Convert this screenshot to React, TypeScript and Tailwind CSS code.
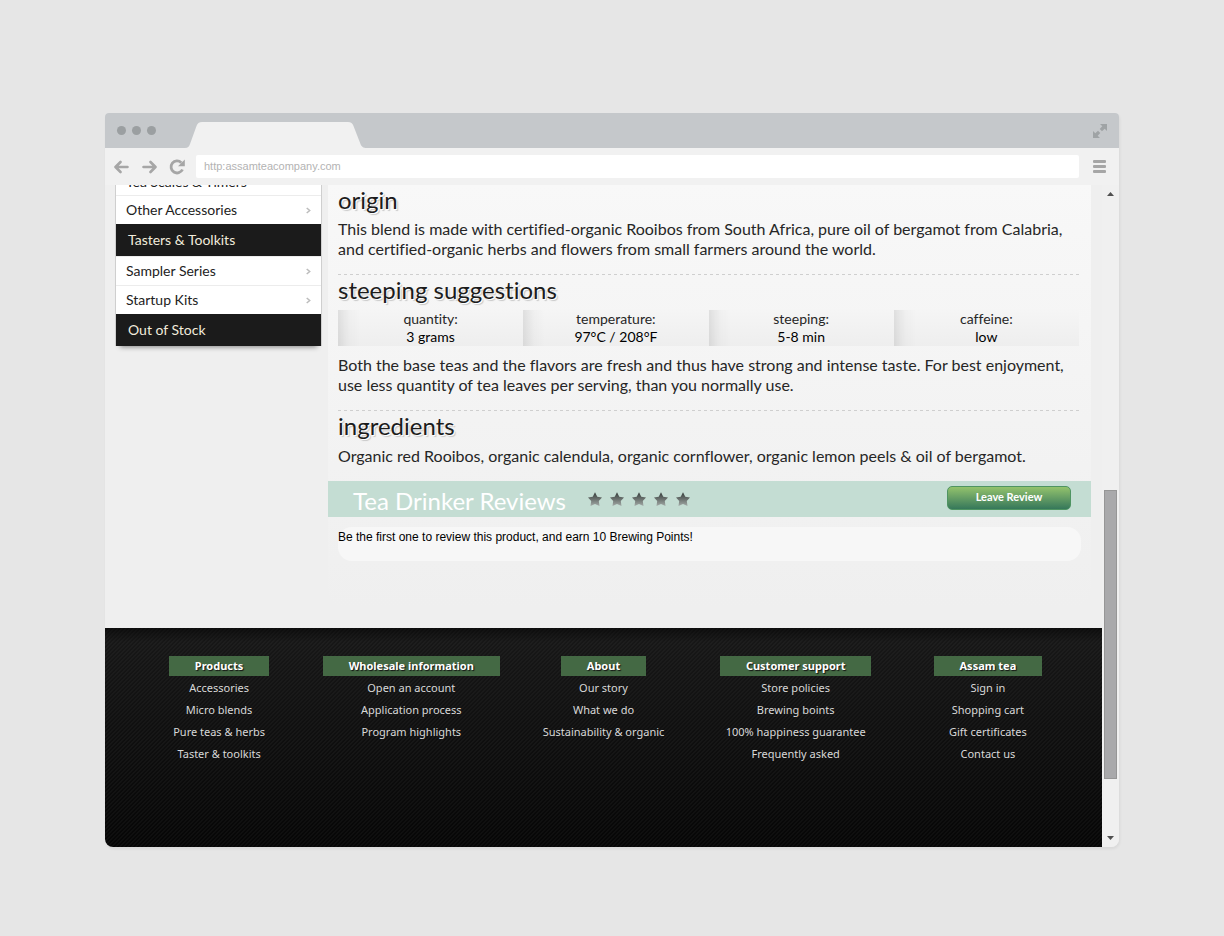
import React from "react";

type NavItem = { label: string; heading?: boolean; clipped?: boolean };

const navItems: NavItem[] = [
  { label: "Tea Scales & Timers", clipped: true },
  { label: "Other Accessories" },
  { label: "Tasters & Toolkits", heading: true },
  { label: "Sampler Series" },
  { label: "Startup Kits" },
  { label: "Out of Stock", heading: true },
];

const steeping = [
  { term: "quantity:", value: "3 grams" },
  { term: "temperature:", value: "97°C / 208°F" },
  { term: "steeping:", value: "5-8 min" },
  { term: "caffeine:", value: "low" },
];

const footerColumns = [
  { title: "Products", links: ["Accessories", "Micro blends", "Pure teas & herbs", "Taster & toolkits"] },
  { title: "Wholesale information", links: ["Open an account", "Application process", "Program highlights"] },
  { title: "About", links: ["Our story", "What we do", "Sustainability & organic"] },
  { title: "Customer support", links: ["Store policies", "Brewing boints", "100% happiness guarantee", "Frequently asked"] },
  { title: "Assam tea", links: ["Sign in", "Shopping cart", "Gift certificates", "Contact us"] },
];

function TabStrip() {
  return (
    <div className="flex h-[35px] items-end bg-[#c5c8cb]">
      <div className="flex h-full flex-1 items-center">
        <div className="flex w-[80px] gap-[6px] pl-3">
          <span className="size-[9px] rounded-full bg-[#9b9fa1]" />
          <span className="size-[9px] rounded-full bg-[#9b9fa1]" />
          <span className="size-[9px] rounded-full bg-[#9b9fa1]" />
        </div>
        <svg className="self-end" width="182" height="26" viewBox="0 0 182 26" fill="#f1f1f1" aria-hidden="true">
          <path d="M0 26C3 26 4 24.500 5 22L11.500 4C12.500 1.300 14 0 17 0H163C166 0 167.500 1.300 168.500 4L175.500 22C176.500 24.500 178 26 182 26Z" />
        </svg>
      </div>
      <button type="button" aria-label="Full screen" className="mr-3 self-center">
        <svg width="14" height="14" viewBox="0 0 14 14" fill="#9fa3a5">
          <path d="M7 0H14V7L11.700 4.700L9 7.300L6.700 5L9.300 2.300ZM0 7L2.300 9.300L5 6.700L7.300 9L4.700 11.700L7 14H0Z" />
        </svg>
      </button>
    </div>
  );
}

function AddressBar() {
  return (
    <div className="flex h-[37px] items-center bg-[#f1f1f1] pr-[13px] pl-[9px]">
      <button type="button" aria-label="Back" className="mr-[13px]">
        <svg width="15" height="14" viewBox="0 0 15 14" fill="none" stroke="#a6a6a6" strokeWidth="2.600" strokeLinecap="round" strokeLinejoin="round">
          <path d="M6.500 2L1.500 7L6.500 12M2 7H13.500" />
        </svg>
      </button>
      <button type="button" aria-label="Forward" className="mr-[12px]">
        <svg width="15" height="14" viewBox="0 0 15 14" fill="none" stroke="#a6a6a6" strokeWidth="2.600" strokeLinecap="round" strokeLinejoin="round">
          <path d="M8.500 2L13.500 7L8.500 12M13 7H1.500" />
        </svg>
      </button>
      <button type="button" aria-label="Reload" className="mr-[11px]">
        <svg width="16" height="16" viewBox="0 0 16 16">
          <path d="M12.300 3.700A6 6 0 1 0 13.500 10.500" fill="none" stroke="#a6a6a6" strokeWidth="2.800" />
          <path d="M15.800 0.500V7.200H9Z" fill="#a6a6a6" />
        </svg>
      </button>
      <input
        type="text"
        aria-label="Address"
        defaultValue="http:assamteacompany.com"
        className="h-[23px] min-w-0 flex-1 rounded-[2px] bg-white px-2 pb-[2px] font-['Liberation_Sans',sans-serif] text-[11px] text-[#b3b3b3] outline-none"
      />
      <button type="button" aria-label="Menu" className="ml-[14px] flex flex-col gap-[2px]">
        <span className="h-[3px] w-[13px] rounded-[1px] bg-[#a6a6a6]" />
        <span className="h-[3px] w-[13px] rounded-[1px] bg-[#a6a6a6]" />
        <span className="h-[3px] w-[13px] rounded-[1px] bg-[#a6a6a6]" />
      </button>
    </div>
  );
}

function Sidebar() {
  return (
    <nav aria-label="Categories" className="ml-[10px] w-[207px] shrink-0 self-start border-x border-[#cfcfcf] shadow-[0_6px_5px_-5px_rgba(0,0,0,0.45)]">
      <ul className="bg-white text-[14px] leading-[20px]">
        {navItems.map((item) =>
          item.clipped ? (
            <li key={item.label} className="flex h-[10px] items-end overflow-hidden pl-[10px] text-[#222]">
              <a href="#" className="block pb-[3px]">{item.label}</a>
            </li>
          ) : item.heading ? (
            <li key={item.label} className="flex h-8 items-center bg-[#1b1b1b] pl-3 text-[#f1ecdc]">
              <a href="#">{item.label}</a>
            </li>
          ) : (
            <li key={item.label} className="h-[29px] border-t border-[#ececec] text-[#222]">
              <a href="#" className="flex h-full items-center justify-between pr-[10px] pl-[10px]">
                {item.label}
                <svg width="5" height="7" viewBox="0 0 5 7" fill="none" stroke="#bcbcbc" strokeWidth="1.500" aria-hidden="true">
                  <path d="M0.700 1L3.700 3.500L0.700 6" />
                </svg>
              </a>
            </li>
          ),
        )}
      </ul>
    </nav>
  );
}

function SectionTitle({ children }: { children: React.ReactNode }) {
  return (
    <h2 className="text-[24px] leading-[30px] text-[#1c1c1c] [text-shadow:1px_1px_0_#fff,2px_2px_1px_#c8c8c8]">
      {children}
    </h2>
  );
}

function Divider() {
  return (
    <div className="h-px bg-[repeating-linear-gradient(90deg,#cfcfcf_0px,#cfcfcf_3px,transparent_3px,transparent_6px)]" />
  );
}

function Star() {
  return (
    <svg width="14" height="14" viewBox="0 0 14 14" aria-hidden="true">
      <defs>
        <linearGradient id="star-fill" x1="0" y1="0" x2="0" y2="1">
          <stop offset="0" stopColor="#363d3b" />
          <stop offset="0.500" stopColor="#6a716e" />
          <stop offset="1" stopColor="#a3aaa7" />
        </linearGradient>
      </defs>
      <path d="M7 0.300L9.300 4.800L14 5.600L10.800 9.100L11.500 14L7 12L2.500 14L3.200 9.100L0 5.600L4.700 4.800Z" fill="url(#star-fill)" />
    </svg>
  );
}

function Product() {
  return (
    <main className="mr-[11px] ml-[6px] min-w-0 flex-1 rounded-b-[20px] bg-linear-to-b from-[#f8f8f8] to-[#efefef] pb-[47px]">
      <div className="pr-3 pl-[10px] text-[16px] leading-5 text-[#262626]">
        <SectionTitle>origin</SectionTitle>
        <p className="mt-1 mb-[15px]">
          This blend is made with certified-organic Rooibos from South Africa, pure oil of bergamot from Calabria,
          and certified-organic herbs and flowers from small farmers around the world.
        </p>
        <Divider />
        <SectionTitle>steeping suggestions</SectionTitle>
        <dl className="mt-[5px] grid grid-cols-4 text-center text-[14px] leading-[18px]">
          {steeping.map((cell) => (
            <div key={cell.term} className="bg-[linear-gradient(90deg,rgba(0,0,0,0.09),rgba(0,0,0,0.02)_6%,transparent_12%),linear-gradient(#f5f5f5,#eeeeee)]">
              <dt>{cell.term}</dt>
              <dd className="text-black">{cell.value}</dd>
            </div>
          ))}
        </dl>
        <p className="mt-[9px] mb-[15px]">
          Both the base teas and the flavors are fresh and thus have strong and intense taste. For best enjoyment,
          use less quantity of tea leaves per serving, than you normally use.
        </p>
        <Divider />
        <SectionTitle>ingredients</SectionTitle>
        <p className="mt-[5px] mb-[15px]">
          Organic red Rooibos, organic calendula, organic cornflower, organic lemon peels &amp; oil of bergamot.
        </p>
      </div>
      <div className="flex h-9 items-center bg-[#c4ddd3] pr-5 pl-[25px]">
        <h2 className="pt-1 text-[24px] leading-8 text-white">Tea Drinker Reviews</h2>
        <div className="ml-[22px] flex gap-2" role="img" aria-label="Five stars">
          <Star />
          <Star />
          <Star />
          <Star />
          <Star />
        </div>
        <button
          type="button"
          className="mb-[2px] ml-auto h-6 w-[124px] rounded-[5px] border border-[#4f9462] bg-linear-to-b from-[#93c36c] to-[#35785a] pb-[2px] text-[11px] leading-5 font-bold text-white"
        >
          Leave Review
        </button>
      </div>
      <p className="mx-[10px] mt-[10px] h-[34px] rounded-[14px] bg-[#f7f7f7] font-['Liberation_Sans',sans-serif] text-[12px] leading-5 text-black">
        Be the first one to review this product, and earn 10 Brewing Points!
      </p>
    </main>
  );
}

function Footer() {
  return (
    <footer className="mt-5 bg-[linear-gradient(rgba(0,0,0,0.5),transparent_14px),linear-gradient(135deg,rgba(255,255,255,0.03)_25%,transparent_25%,transparent_50%,rgba(255,255,255,0.03)_50%,rgba(255,255,255,0.03)_75%,transparent_75%),linear-gradient(#181818,#060606)] [background-size:auto,4px_4px,auto] px-[18px] pt-7 pb-[82px] font-['Noto_Sans',sans-serif] text-[11px]">
      <div className="grid grid-cols-5 text-center">
        {footerColumns.map((column) => (
          <section key={column.title} className="flex flex-col items-center">
            <h3 className="mb-px bg-[#446944] px-[26px] leading-5 font-bold whitespace-nowrap text-white [text-shadow:1px_1px_1px_#111]">
              {column.title}
            </h3>
            <ul className="leading-[22px] whitespace-nowrap text-[#d8d8d8]">
              {column.links.map((link) => (
                <li key={link}>
                  <a href="#">{link}</a>
                </li>
              ))}
            </ul>
          </section>
        ))}
      </div>
    </footer>
  );
}

function Scrollbar() {
  return (
    <div className="flex w-[17px] shrink-0 flex-col items-center bg-[#f0f0f0] py-[7px]" aria-hidden="true">
      <svg width="7" height="4" viewBox="0 0 7 4" fill="#505050">
        <path d="M0 4L3.500 0L7 4Z" />
      </svg>
      <div className="flex w-full flex-1 flex-col px-[2px]">
        <div className="flex-[295]" />
        <div className="flex-[288] border border-[#969696] bg-[#a9a9ab]" />
        <div className="flex-[57]" />
      </div>
      <svg width="7" height="4" viewBox="0 0 7 4" fill="#505050">
        <path d="M0 0H7L3.500 4Z" />
      </svg>
    </div>
  );
}

export default function App() {
  return (
    <div className="min-h-screen bg-[#e6e6e6] px-[105px] pt-[113px] pb-[89px] font-['Lato',sans-serif] [font-variant-ligatures:none]">
      <div className="overflow-hidden rounded-t-[4px] rounded-b-[8px] bg-[#efefef] shadow-[1px_2px_3px_rgba(0,0,0,0.06)]">
        <TabStrip />
        <AddressBar />
        <div className="flex">
          <div className="min-w-0 flex-1">
            <div className="flex">
              <Sidebar />
              <Product />
            </div>
            <Footer />
          </div>
          <Scrollbar />
        </div>
      </div>
    </div>
  );
}
